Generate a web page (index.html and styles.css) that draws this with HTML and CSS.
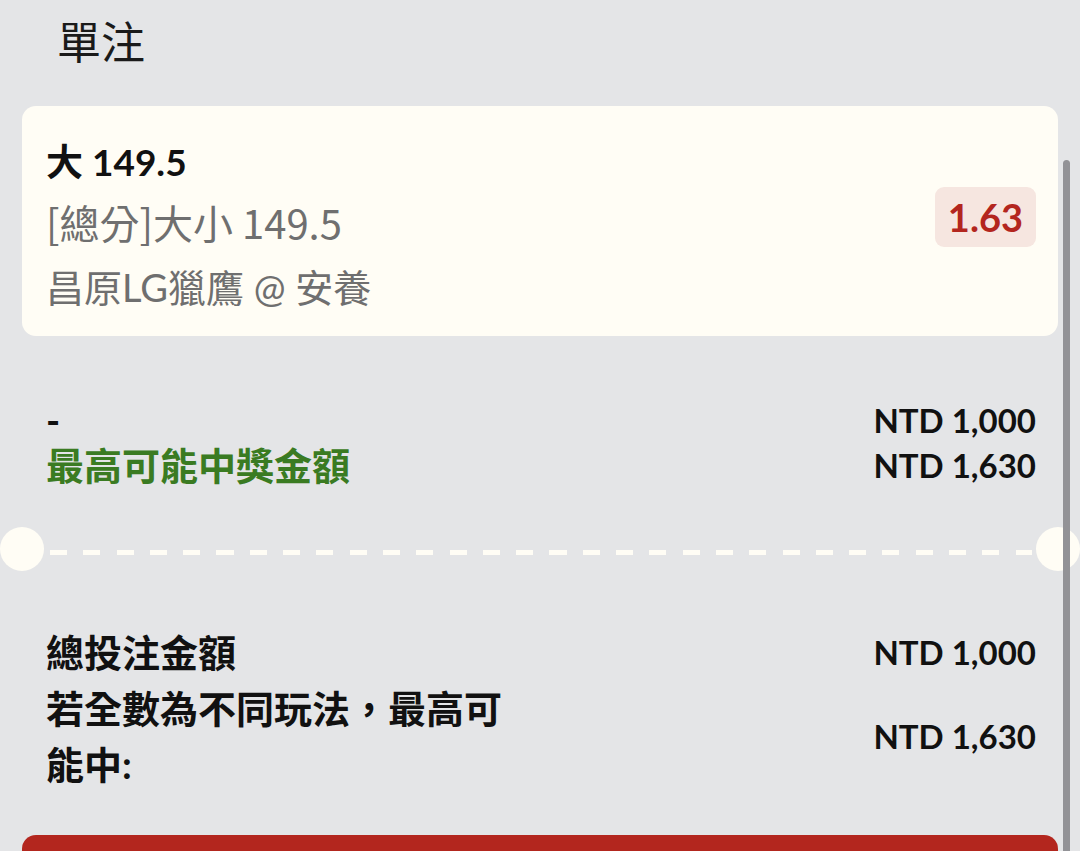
FILE: index.html
```html
<!DOCTYPE html>
<html lang="zh-Hant">
<head>
<meta charset="utf-8">
<title>單注</title>
<link rel="stylesheet" href="styles.css">
</head>
<body>
<div class="page">
  <header class="title">單注</header>

  <section class="bet-card">
    <div class="bet-info">
      <div class="bet-pick">大 149.5</div>
      <div class="bet-market">[總分]大小 149.5</div>
      <div class="bet-match">昌原LG獵鷹 @ 安養</div>
    </div>
    <div class="odds">1.63</div>
  </section>

  <section class="stake">
    <div class="row">
      <span class="label">-</span>
      <span class="amount">NTD 1,000</span>
    </div>
    <div class="row">
      <span class="label green">最高可能中獎金額</span>
      <span class="amount">NTD 1,630</span>
    </div>
  </section>

  <div class="separator">
    <span class="notch"></span>
    <span class="dash"></span>
    <span class="notch"></span>
  </div>

  <section class="summary">
    <div class="srow">
      <span class="slabel">總投注金額</span>
      <span class="amount">NTD 1,000</span>
    </div>
    <div class="srow">
      <span class="slabel wrap">若全數為不同玩法，最高可能中:</span>
      <span class="amount">NTD 1,630</span>
    </div>
  </section>

  <div class="submit"></div>
</div>
<div class="scrollbar"></div>
</body>
</html>
```

FILE: styles.css
```css
html, body {
  margin: 0;
  padding: 0;
  background: #e4e5e7;
  overflow: hidden;
}

body {
  font-family: "Lato", "Noto Sans CJK TC", sans-serif;
  color: #111111;
  height: 851px;
}

.page {
  padding: 0 22px;
}

.title {
  font-family: "Noto Sans CJK TC", sans-serif;
  font-size: 44px;
  font-weight: 400;
  line-height: 60px;
  padding: 10px 0 0 35px;
  color: #1a1a1a;
}

.bet-card {
  margin-top: 36px;
  background: #fffdf5;
  border-radius: 14px;
  padding: 24px 22px 17px 24px;
  display: flex;
  align-items: center;
  justify-content: space-between;
}

.bet-info {
  font-size: 38px;
  line-height: 63px;
}

.bet-pick {
  font-weight: 700;
  font-size: 37px;
  color: #111111;
}

.bet-market,
.bet-match {
  color: #6f6f6f;
}

.bet-market {
  font-family: "Noto Sans CJK TC", sans-serif;
  font-size: 40px;
  line-height: 58px;
  margin-bottom: 5px;
}

.odds {
  background: #f6e6e0;
  color: #b3261e;
  font-weight: 700;
  font-size: 38px;
  line-height: 60px;
  padding: 0 13px;
  border-radius: 9px;
  margin-bottom: 16px;
}

.stake {
  margin-top: 62px;
  padding: 0 22px 0 24px;
}

.row {
  display: flex;
  justify-content: space-between;
  align-items: center;
  line-height: 45px;
  font-weight: 700;
}

.row .label {
  font-size: 38px;
}

.green {
  color: #3a7b22;
}

.amount {
  font-size: 33px;
  font-weight: 700;
  color: #111111;
}

.separator {
  margin: 39px -22px 0;
  display: flex;
  align-items: center;
  height: 44px;
}

.notch {
  width: 44px;
  height: 44px;
  border-radius: 50%;
  background: #fffdf5;
  flex: none;
}

.dash {
  flex: 1;
  height: 5px;
  margin: 6px 4px 0 6px;
  background: repeating-linear-gradient(to right, #fffdf5 0 17px, transparent 17px 33.3px);
}

.summary {
  margin-top: 53px;
  padding: 0 22px 0 24px;
}

.srow {
  display: flex;
  justify-content: space-between;
  align-items: center;
  line-height: 56px;
}

.slabel {
  font-size: 38px;
  font-weight: 700;
}

.slabel.wrap {
  max-width: 480px;
}

.submit {
  margin-top: 43px;
  height: 40px;
  background: #b3261e;
  border-radius: 14px 14px 0 0;
}

.scrollbar {
  position: absolute;
  left: 1063px;
  top: 160px;
  width: 7px;
  height: 700px;
  border-radius: 4px 4px 0 0;
  background: #929296;
}
```
